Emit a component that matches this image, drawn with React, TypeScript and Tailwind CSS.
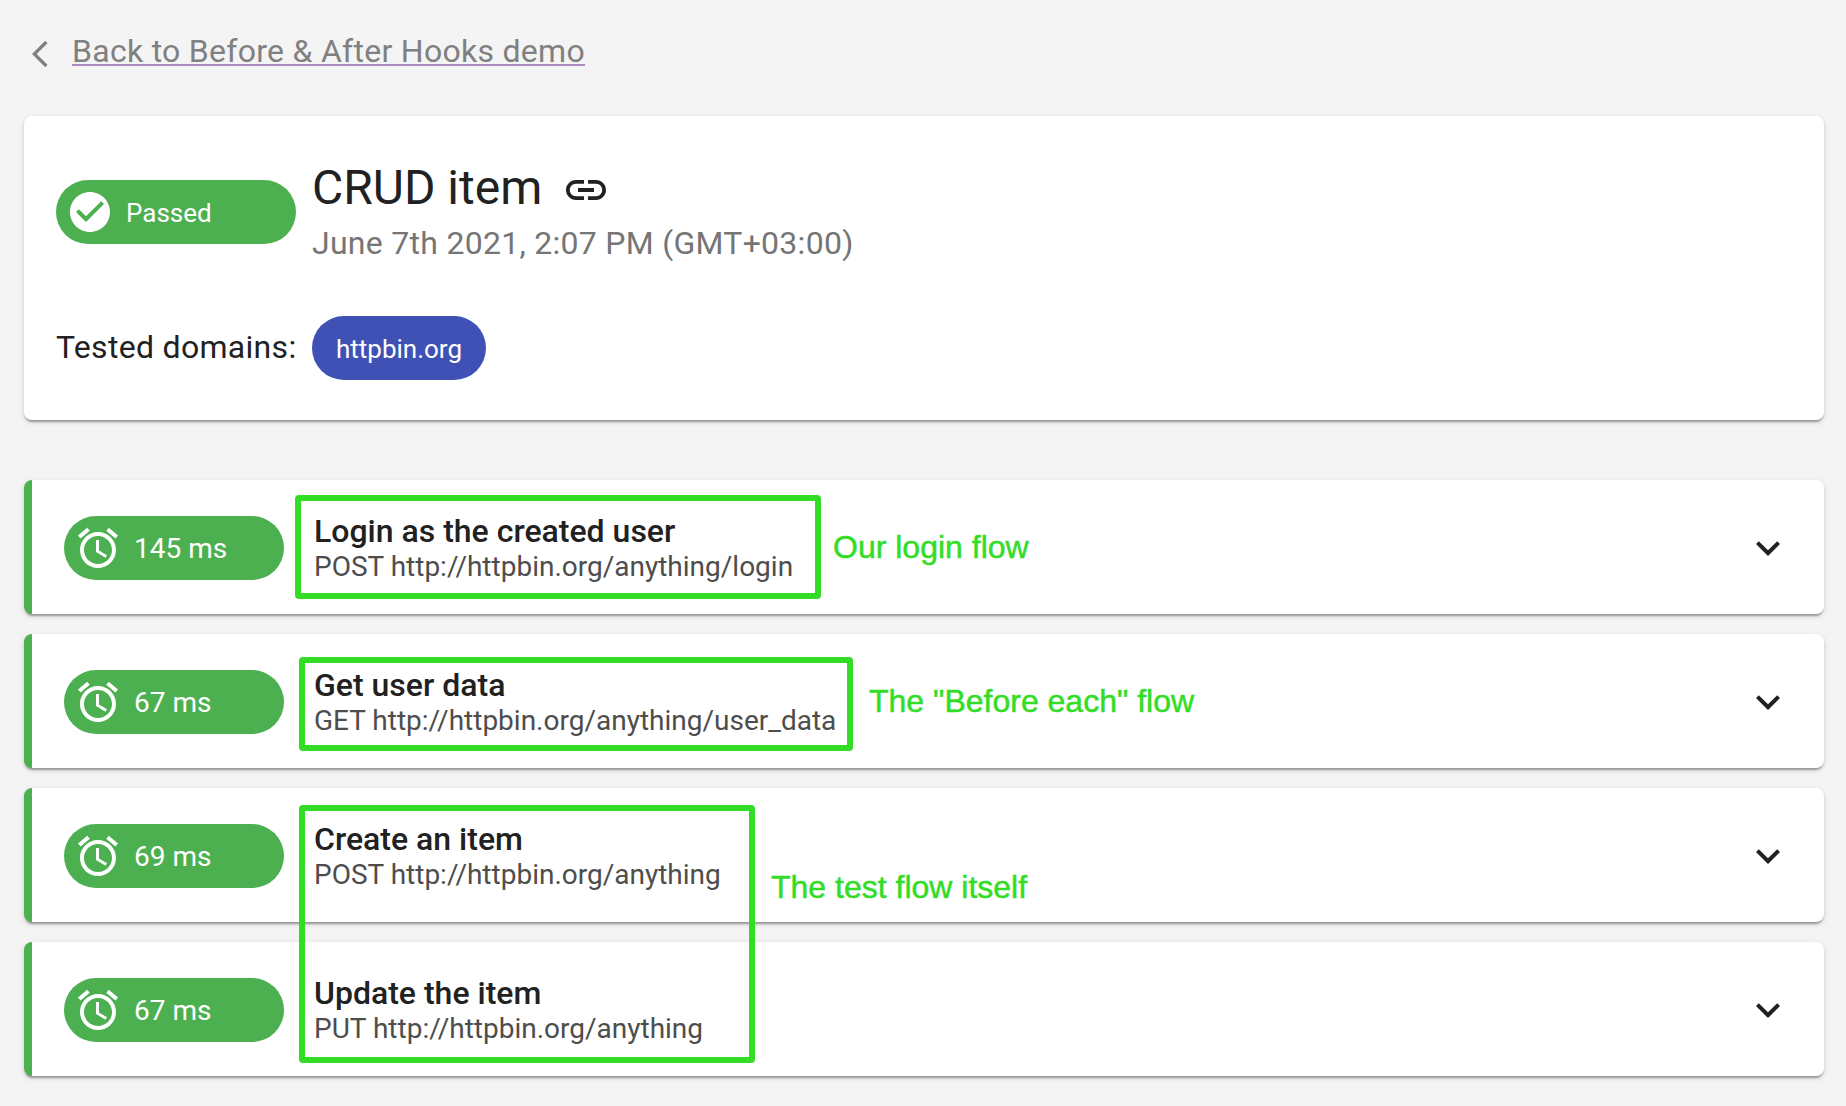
import type { ReactNode } from 'react';

const PATHS = {
  back: 'M11.67 3.87L9.9 2.1 0 12l9.9 9.9 1.77-1.77L3.54 12z',
  check:
    'M12 2C6.48 2 2 6.48 2 12s4.48 10 10 10 10-4.48 10-10S17.52 2 12 2zm-2 15l-5-5 1.41-1.41L10 14.17l7.59-7.59L19 8l-9 9z',
  link: 'M3.9 12c0-1.71 1.39-3.1 3.1-3.1h4V7H7c-2.76 0-5 2.24-5 5s2.24 5 5 5h4v-1.9H7c-1.71 0-3.1-1.39-3.1-3.1zM8 13h8v-2H8v2zm9-6h-4v1.9h4c1.71 0 3.1 1.39 3.1 3.1s-1.39 3.1-3.1 3.1h-4V17h4c2.76 0 5-2.24 5-5s-2.24-5-5-5z',
  alarm:
    'M22 5.72l-4.6-3.86-1.29 1.53 4.6 3.86L22 5.72zM7.88 3.39L6.6 1.86 2 5.71l1.29 1.53 4.59-3.85zM12.5 8H11v6l4.75 2.85.75-1.23-4-2.37V8zM12 4c-4.97 0-9 4.03-9 9s4.02 9 9 9c4.97 0 9-4.03 9-9s-4.03-9-9-9zm0 16c-3.87 0-7-3.13-7-7s3.13-7 7-7 7 3.13 7 7-3.13 7-7 7z',
  expand: 'M16.59 8.59L12 13.17 7.41 8.59 6 10l6 6 6-6z',
};

function Icon({ name, className }: { name: keyof typeof PATHS; className: string }) {
  return (
    <svg viewBox="0 0 24 24" fill="currentColor" className={className}>
      <path d={PATHS[name]} />
    </svg>
  );
}

const STEPS = [
  { time: '145 ms', title: 'Login as the created user', request: 'POST http://httpbin.org/anything/login' },
  { time: '67 ms', title: 'Get user data', request: 'GET http://httpbin.org/anything/user_data' },
  { time: '69 ms', title: 'Create an item', request: 'POST http://httpbin.org/anything' },
  { time: '67 ms', title: 'Update the item', request: 'PUT http://httpbin.org/anything' },
];

function Step({ time, title, request }: (typeof STEPS)[number]) {
  return (
    <div className="flex h-[134px] items-start rounded-lg border-l-8 border-[#4caf50] bg-white pt-9 pl-8 shadow-[0_4px_2px_-2px_rgba(0,0,0,0.2),0_2px_2px_0_rgba(0,0,0,0.14),0_2px_6px_0_rgba(0,0,0,0.12)]">
      <div className="flex h-16 w-[220px] shrink-0 items-center rounded-full bg-[#4caf50] pl-2.5 text-white">
        <Icon name="alarm" className="size-12" />
        <span className="ml-3 pt-px text-[28px] leading-10">{time}</span>
      </div>
      <div className="ml-[30px] flex-1">
        <div className="-mt-1 text-[32px] leading-[38px] font-medium whitespace-nowrap">{title}</div>
        <div className="text-[28px] leading-[34px] whitespace-nowrap text-[#4d4d4d]">{request}</div>
      </div>
      <Icon name="expand" className="mt-2 mr-8 size-12 text-[#212121]" />
    </div>
  );
}

function Note({ className, children }: { className: string; children: ReactNode }) {
  return (
    <div
      className={`absolute font-['Liberation_Sans',Arial,sans-serif] text-[32px] leading-9 whitespace-nowrap text-[#33dd26] [-webkit-text-stroke:0.5px_#33dd26] ${className}`}
    >
      {children}
    </div>
  );
}

function Outline({ className }: { className: string }) {
  return <div className={`absolute rounded-[4px] border-6 border-[#33dd26] ${className}`} />;
}

export default function App() {
  return (
    <div className="relative h-[1106px] w-[1846px] overflow-hidden bg-[#f4f4f4] pl-6 font-[Roboto,sans-serif] text-[#212121]">
      <header className="flex h-[116px] items-start pl-2 text-[#808080]">
        <Icon name="back" className="mt-[38px] size-8" />
        <a className="mt-[38px] ml-2 border-b-2 border-[#a78bc0] text-[32px] leading-[26px] tracking-[0.28px] whitespace-nowrap">
          Back to Before &amp; After Hooks demo
        </a>
      </header>

      <main className="w-[1800px]">
        <section className="h-[304px] rounded-lg bg-white px-8 pt-11 shadow-[0_4px_2px_-2px_rgba(0,0,0,0.2),0_2px_2px_0_rgba(0,0,0,0.14),0_2px_6px_0_rgba(0,0,0,0.12)]">
          <div className="flex h-[156px] items-start">
            <div className="mt-5 flex h-16 w-60 items-center rounded-full bg-[#4caf50] pl-2.5 text-white">
              <Icon name="check" className="size-12" />
              <span className="ml-3 pt-0.5 text-[26px] leading-10">Passed</span>
            </div>
            <div className="ml-4">
              <div className="flex h-14 items-center">
                <h1 className="text-[48px] leading-14">CRUD item</h1>
                <Icon name="link" className="mt-1 ml-5 size-12" />
              </div>
              <p className="text-[32px] leading-[54px] tracking-[0.28px] text-[#757575]">
                June 7th 2021, 2:07 PM (GMT+03:00)
              </p>
            </div>
          </div>
          <div className="flex h-16 items-center">
            <span className="w-60 pb-0.5 text-[32px] tracking-[0.3px] whitespace-nowrap">Tested domains:</span>
            <span className="ml-4 flex h-16 w-[174px] items-center justify-center rounded-full bg-[#3f51b5] pt-0.5 text-[26px] text-white">
              httpbin.org
            </span>
          </div>
        </section>

        <section className="mt-[60px] flex flex-col gap-5">
          {STEPS.map((step) => (
            <Step key={step.title} {...step} />
          ))}
        </section>
      </main>

      <Outline className="top-[495px] left-[295px] h-[104px] w-[526px]" />
      <Outline className="top-[657px] left-[299px] h-[94px] w-[554px]" />
      <Outline className="top-[805px] left-[299px] h-[258px] w-[456px]" />
      <Note className="top-[529px] left-[833px]">Our login flow</Note>
      <Note className="top-[683px] left-[869px]">The "Before each" flow</Note>
      <Note className="top-[869px] left-[771px]">The test flow itself</Note>
    </div>
  );
}
